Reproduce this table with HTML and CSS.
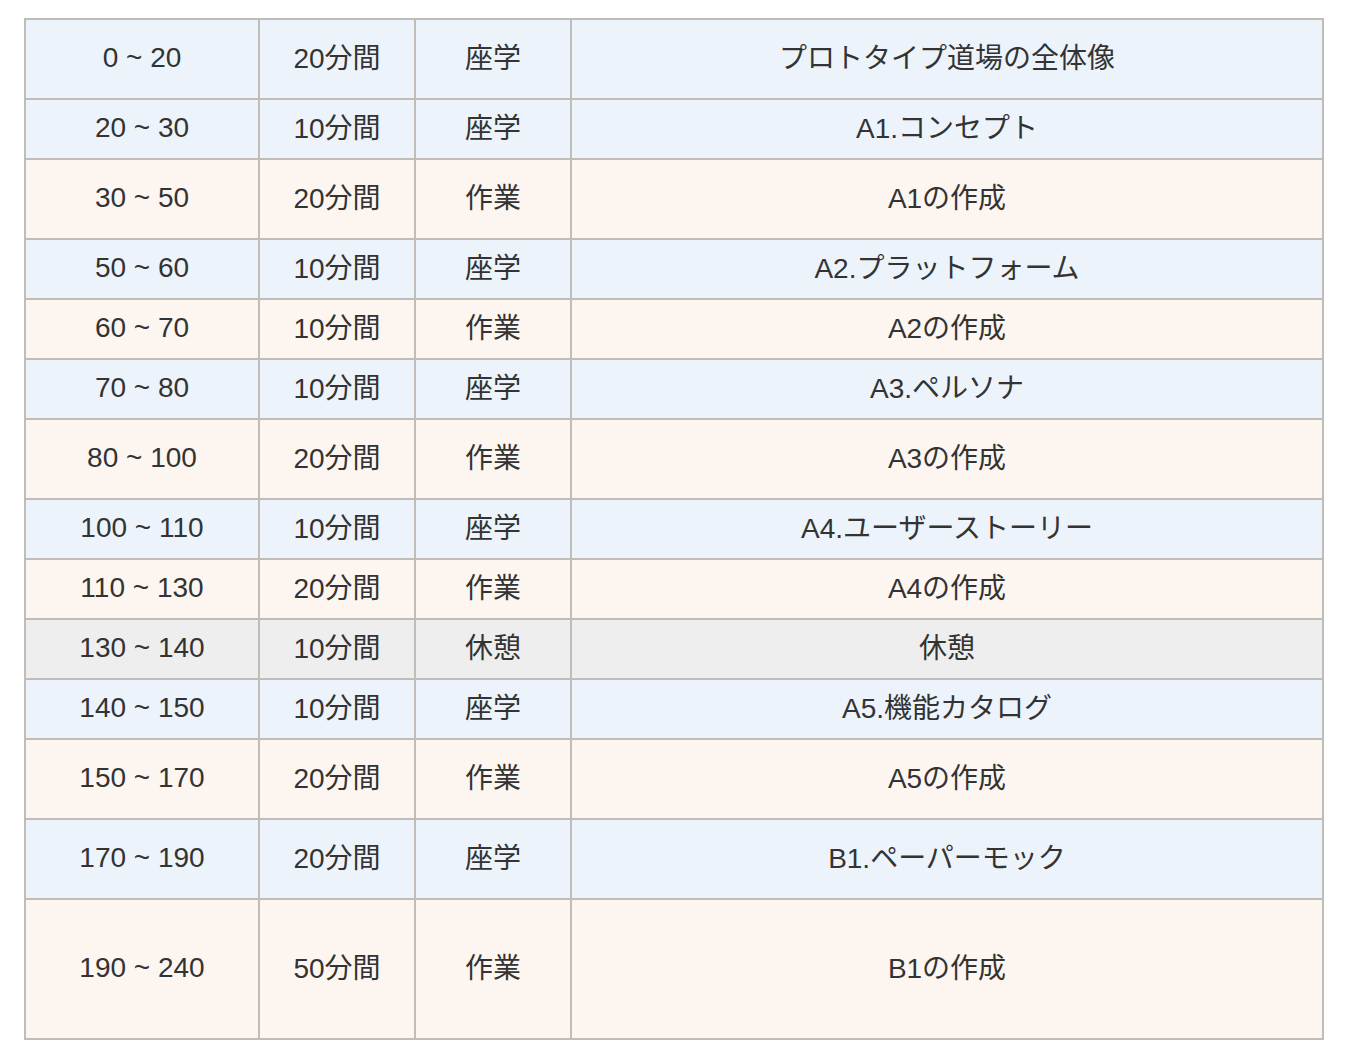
FILE: index.html
```html
<!DOCTYPE html>
<html lang="ja">
<head>
<meta charset="utf-8">
<title>プロトタイプ道場 タイムテーブル</title>
<link rel="stylesheet" href="styles.css">
</head>
<body>
<div class="wrap">
<table class="schedule">
  <colgroup>
    <col class="c-time">
    <col class="c-dur">
    <col class="c-type">
    <col class="c-title">
  </colgroup>
  <tbody>
    <tr class="lecture h20"><td class="time">0 ~ 20</td><td>20分間</td><td>座学</td><td>プロトタイプ道場の全体像</td></tr>
    <tr class="lecture h10"><td class="time">20 ~ 30</td><td>10分間</td><td>座学</td><td>A1.コンセプト</td></tr>
    <tr class="work h20"><td class="time">30 ~ 50</td><td>20分間</td><td>作業</td><td>A1の作成</td></tr>
    <tr class="lecture h10"><td class="time">50 ~ 60</td><td>10分間</td><td>座学</td><td>A2.プラットフォーム</td></tr>
    <tr class="work h10"><td class="time">60 ~ 70</td><td>10分間</td><td>作業</td><td>A2の作成</td></tr>
    <tr class="lecture h10"><td class="time">70 ~ 80</td><td>10分間</td><td>座学</td><td>A3.ペルソナ</td></tr>
    <tr class="work h20"><td class="time">80 ~ 100</td><td>20分間</td><td>作業</td><td>A3の作成</td></tr>
    <tr class="lecture h10"><td class="time">100 ~ 110</td><td>10分間</td><td>座学</td><td>A4.ユーザーストーリー</td></tr>
    <tr class="work h10"><td class="time">110 ~ 130</td><td>20分間</td><td>作業</td><td>A4の作成</td></tr>
    <tr class="rest h10"><td class="time">130 ~ 140</td><td>10分間</td><td>休憩</td><td>休憩</td></tr>
    <tr class="lecture h10"><td class="time">140 ~ 150</td><td>10分間</td><td>座学</td><td>A5.機能カタログ</td></tr>
    <tr class="work h20"><td class="time">150 ~ 170</td><td>20分間</td><td>作業</td><td>A5の作成</td></tr>
    <tr class="lecture h20"><td class="time">170 ~ 190</td><td>20分間</td><td>座学</td><td>B1.ペーパーモック</td></tr>
    <tr class="work h50"><td class="time">190 ~ 240</td><td>50分間</td><td>作業</td><td>B1の作成</td></tr>
  </tbody>
</table>
</div>
</body>
</html>
```

FILE: styles.css
```css
html, body {
  margin: 0;
  padding: 0;
  background: #ffffff;
}

.wrap {
  padding: 18px 22px 6px 24px;
}

.schedule {
  width: 1300px;
  table-layout: fixed;
  border-collapse: separate;
  border-spacing: 0;
  border-top: 2px solid #c0bcb7;
  border-left: 2px solid #c0bcb7;
  font-family: "Liberation Sans", "Noto Sans CJK JP", sans-serif;
  font-size: 28px;
  color: #333333;
}

.c-time { width: 234px; }
.c-dur { width: 156px; }
.c-type { width: 156px; }
.c-title { width: 752px; }

.schedule td {
  box-sizing: border-box;
  padding: 0 8px 6px;
  text-align: center;
  vertical-align: middle;
  border-right: 2px solid #c0bcb7;
  border-bottom: 2px solid #c0bcb7;
  white-space: nowrap;
}

.schedule td.time {
  padding-bottom: 2px;
}

.h10 { height: 60px; }
.h20 { height: 80px; }
.h50 { height: 140px; }

.lecture td { background: #edf3fb; }
.work td { background: #fdf6f0; }
.rest td { background: #eeeeee; }
```
